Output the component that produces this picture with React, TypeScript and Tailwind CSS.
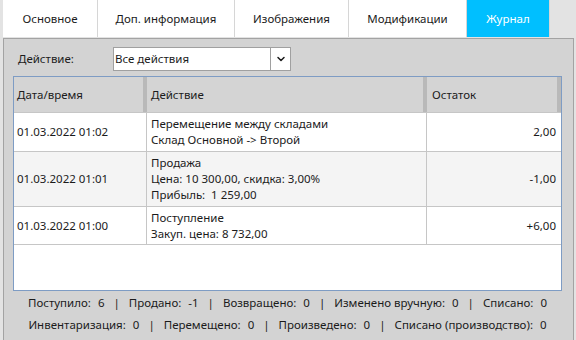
import { ChevronDown } from 'lucide-react'

const tabs = [
  { label: 'Основное', w: 'w-[95px]' },
  { label: 'Доп. информация', w: 'w-[137px]' },
  { label: 'Изображения', w: 'w-[114px]' },
  { label: 'Модификации', w: 'w-[118px]' },
  { label: 'Журнал', w: 'w-[83px]', active: true },
]

const rows = [
  { date: '01.03.2022 01:02', lines: ['Перемещение между складами', 'Склад Основной -> Второй'], rest: '2,00', h: 'h-[39px]', bg: 'bg-white' },
  { date: '01.03.2022 01:01', lines: ['Продажа', 'Цена: 10 300,00, скидка: 3,00%', 'Прибыль:  1 259,00'], rest: '-1,00', h: 'h-[55px]', bg: 'bg-[#f4f4f4]' },
  { date: '01.03.2022 01:00', lines: ['Поступление', 'Закуп. цена: 8 732,00'], rest: '+6,00', h: 'h-[38px]', bg: 'bg-white' },
]

const stats1: [string, string][] = [
  ['Поступило:', '6'], ['Продано:', '-1'], ['Возвращено:', '0'], ['Изменено вручную:', '0'], ['Списано:', '0'],
]
const stats2: [string, string][] = [
  ['Инвентаризация:', '0'], ['Перемещено:', '0'], ['Произведено:', '0'], ['Списано (производство):', '0'],
]

function StatLine({ items }: { items: [string, string][] }) {
  return (
    <div className="flex h-[22px] items-center justify-center">
      {items.map(([k, v], i) => (
        <div key={k} className="flex items-center">
          {i > 0 && <span className="mx-[9px]">|</span>}
          <span>{k}</span>
          <span className="ml-[7px]">{v}</span>
        </div>
      ))}
    </div>
  )
}

export default function App() {
  return (
    <div className="h-[340px] w-[576px] overflow-hidden bg-[#e3e3e3] font-['Noto_Sans',sans-serif] text-[11.5px] text-[#1b1b1b]">
      <div className="ml-[3px] flex h-[37px]">
        {tabs.map((t) => (
          <div key={t.label}
            className={`${t.w} flex items-center justify-center border-r border-[#d6d6d6] ${t.active ? 'bg-[#00bfff] text-white' : 'bg-white'}`}>
            {t.label}
          </div>
        ))}
      </div>

      <div className="ml-[3px] mt-[1px] h-[320px] w-[571px] border border-[#a3a3a3] bg-[#d3d3d3] pl-[9px] pr-[11px] pt-[8px]">
        <div className="flex h-[24px] items-center">
          <span className="ml-[5px] w-[95px]">Действие:</span>
          <div className="flex h-[24px] w-[178px] border border-[#a0a0a0] bg-white">
            <span className="flex flex-1 items-center pl-[1px]">Все действия</span>
            <div className="flex w-[20px] items-center justify-center border-l border-[#a0a0a0]">
              <ChevronDown size={12} strokeWidth={3} />
            </div>
          </div>
        </div>

        <div className="mt-[5px] flex h-[215px] flex-col border border-[#7e9cc4] bg-white">
          <div className="flex h-[35px] bg-[#d4d4d4]">
            <div className="flex w-[133px]"><span className="flex flex-1 items-center pl-[3px]">Дата/время</span><div className="w-[4px] bg-[#b9b9b9]" /></div>
            <div className="flex w-[280px]"><span className="flex flex-1 items-center pl-[4px]">Действие</span><div className="w-[4px] bg-[#b9b9b9]" /></div>
            <div className="flex flex-1"><span className="flex flex-1 items-center pl-[5px]">Остаток</span><div className="w-[4px] bg-[#b9b9b9]" /></div>
          </div>
          {rows.map((r) => (
            <div key={r.date} className={`flex ${r.h} ${r.bg} border-t border-[#c6c6c6]`}>
              <div className="flex w-[133px] items-center border-r border-[#c6c6c6] pl-[3px]">{r.date}</div>
              <div className="flex w-[280px] flex-col justify-center border-r border-[#c6c6c6] pl-[4px] leading-[16px]">
                {r.lines.map((l) => <span key={l} className="whitespace-pre">{l}</span>)}
              </div>
              <div className="flex flex-1 items-center justify-end pr-[5px]">{r.rest}</div>
            </div>
          ))}
          <div className="border-t border-[#c6c6c6]" />
        </div>

        <div className="mt-[1px] flex flex-col">
          <StatLine items={stats1} />
          <StatLine items={stats2} />
        </div>
      </div>
    </div>
  )
}
